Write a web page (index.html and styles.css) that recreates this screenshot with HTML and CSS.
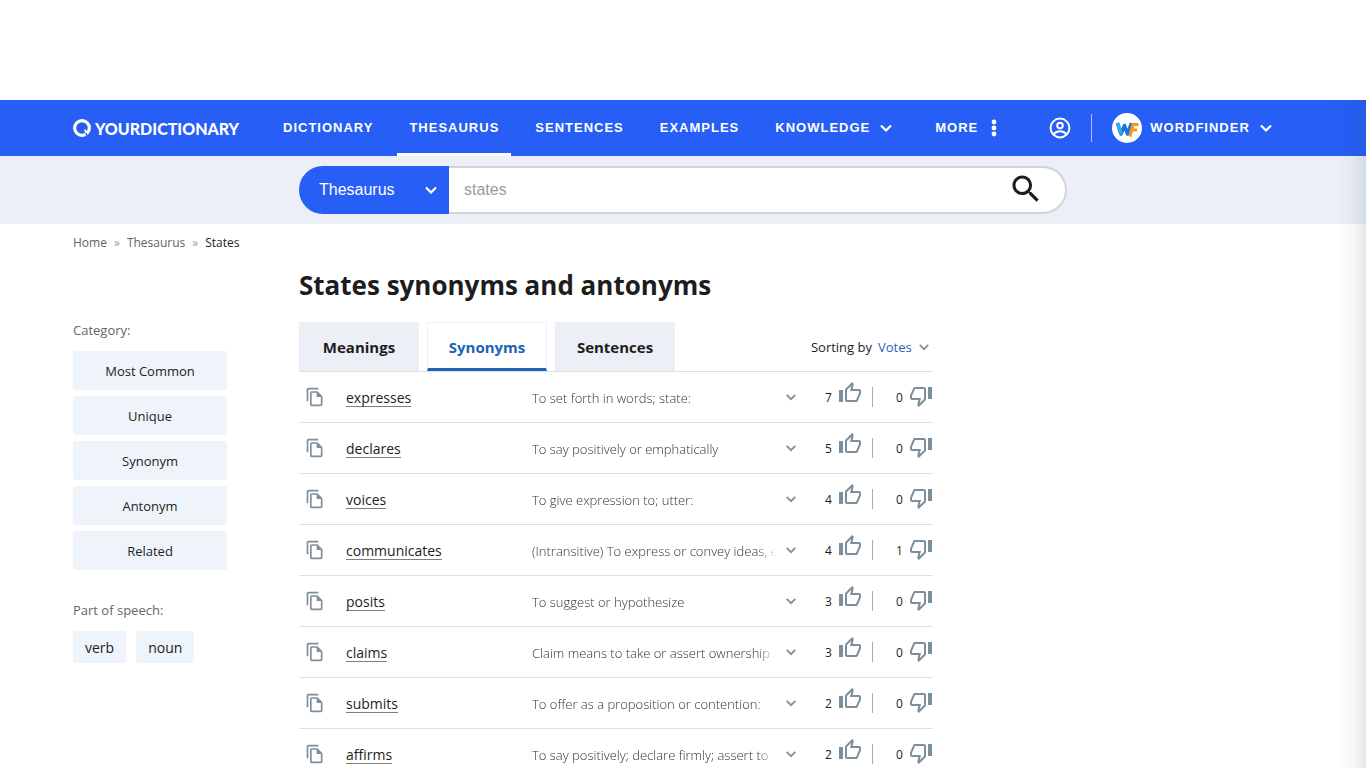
FILE: index.html
```html
<!DOCTYPE html>
<html lang="en">

<head>
  <meta charset="UTF-8" />
  <title>States synonyms and antonyms</title>
  <meta name="viewport" content="width=device-width, initial-scale=1.0" />
  <link rel="stylesheet" href="styles.css">
</head>

<body>

  <!-- Shared icons -->
  <svg class="sprite" aria-hidden="true">
    <symbol id="chevron" viewBox="0 0 14 14"><path d="M2 4.5l5 5 5-5" fill="none" stroke="currentColor" stroke-width="2.2" /></symbol>
    <symbol id="copy" viewBox="0 0 24 24"><path d="M16 1H4c-1.1 0-2 .9-2 2v14h2V3h12V1zm-1 4H8c-1.1 0-2 .9-2 2v14c0 1.1.9 2 2 2h11c1.1 0 2-.9 2-2V11l-6-6zM8 21V7h6v5h5v9H8z" /></symbol>
    <symbol id="up" viewBox="0 0 24 24"><path d="M9 21h9c.83 0 1.54-.5 1.84-1.22l3.02-7.05c.09-.23.14-.47.14-.73v-2c0-1.1-.9-2-2-2h-6.31l.95-4.57.03-.32c0-.41-.17-.79-.44-1.06L14.17 1 7.58 7.59C7.22 7.95 7 8.45 7 9v10c0 1.1.9 2 2 2zM9 9l4.34-4.34L12 10h9v2l-3 7H9V9zM1 9h4v12H1z" /></symbol>
    <symbol id="down" viewBox="0 0 24 24"><path d="M15 3H6c-.83 0-1.54.5-1.84 1.22l-3.02 7.05c-.09.23-.14.47-.14.73v2c0 1.1.9 2 2 2h6.31l-.95 4.57-.03.32c0 .41.17.79.44 1.06L9.83 23l6.59-6.59c.36-.36.58-.86.58-1.41V5c0-1.1-.9-2-2-2zm0 12l-4.34 4.34L12 14H3v-2l3-7h9v10zm4-12h4v12h-4V3z" /></symbol>
  </svg>

  <div class="ad-space"></div>

  <header class="topbar">
    <div class="container topbar-inner">
      <a href="#" class="logo">
        <svg width="18" height="18" viewBox="0 0 18 18"><circle cx="9" cy="9" r="7.4" fill="none" stroke="#fff" stroke-width="3.2" /><path d="M11.500 11.500l3 6" stroke="#2860f6" stroke-width="1.600" /><path d="M11.800 10.600l1.700 3.400" stroke="#fff" stroke-width="1.800" /></svg>
        <span>YOURDICTIONARY</span>
      </a>
      <nav class="nav">
        <a href="#">DICTIONARY</a>
        <a href="#" class="active">THESAURUS</a>
        <a href="#">SENTENCES</a>
        <a href="#">EXAMPLES</a>
        <button type="button">KNOWLEDGE <svg class="nav-arrow"><use href="#chevron" /></svg></button>
        <button type="button" class="more">MORE <svg width="6" height="18" viewBox="0 0 6 18" fill="#fff"><circle cx="3" cy="3" r="2.4" /><circle cx="3" cy="9" r="2.4" /><circle cx="3" cy="15" r="2.4" /></svg></button>
      </nav>
      <div class="account">
        <button type="button" aria-label="Account">
          <svg width="22" height="22" viewBox="0 0 22 22" fill="none" stroke="#fff" stroke-width="2"><circle cx="11" cy="11" r="9.4" /><circle cx="11" cy="8.6" r="2.8" /><path d="M4.8 17.2c3-3.9 9.4-3.9 12.4 0" /></svg>
        </button>
        <button type="button" class="wordfinder">
          <svg width="30" height="30" viewBox="0 0 30 30"><circle cx="15" cy="15" r="15" fill="#fff" /><path d="M5.500 10l3.500 11 3.500-8.500 3 8.500 4-11" fill="none" stroke="#1a76d8" stroke-width="3.600" stroke-linejoin="round" /><path d="M5.500 10l3.500 11" stroke="#37a8ef" stroke-width="3.600" /><path d="M17.800 23.500l3.200-12h5.600M19.600 17h5.400" fill="none" stroke="#f7941d" stroke-width="3.200" /></svg>
          <span>WORDFINDER</span>
          <svg class="nav-arrow"><use href="#chevron" /></svg>
        </button>
      </div>
    </div>
  </header>

  <div class="search-band">
    <div class="container">
      <form class="search">
        <div class="search-type">
          <select aria-label="Search in">
            <option>Thesaurus</option>
            <option>Dictionary</option>
            <option>Sentences</option>
          </select>
          <svg class="nav-arrow"><use href="#chevron" /></svg>
        </div>
        <input type="text" placeholder="states" aria-label="Search word" />
        <button type="submit" aria-label="Search">
          <svg width="36" height="36" viewBox="0 0 24 24" fill="#1d1d1d"><path d="M15.500 14h-.79l-.28-.27C15.410 12.590 16 11.110 16 9.500 16 5.910 13.090 3 9.500 3S3 5.910 3 9.500 5.910 16 9.500 16c1.610 0 3.090-.59 4.230-1.570l.27.28v.79l5 4.990L20.490 19l-4.990-5zm-6 0C7.010 14 5 11.990 5 9.500S7.010 5 9.500 5 14 7.010 14 9.500 11.990 14 9.500 14z" /></svg>
        </button>
      </form>
    </div>
  </div>

  <div class="container">
    <nav class="breadcrumb" aria-label="Breadcrumb">
      <a href="#">Home</a><span class="sep">»</span><a href="#">Thesaurus</a><span class="sep">»</span><span class="current">States</span>
    </nav>

    <div class="layout">
      <aside class="filters">
        <p class="filter-title">Category:</p>
        <div class="categories">
          <button type="button">Most Common</button>
          <button type="button">Unique</button>
          <button type="button">Synonym</button>
          <button type="button">Antonym</button>
          <button type="button">Related</button>
        </div>
        <p class="filter-title">Part of speech:</p>
        <div class="pos">
          <button type="button">verb</button>
          <button type="button">noun</button>
        </div>
      </aside>

      <main>
        <h1>States synonyms and antonyms</h1>
        <div class="tabs">
          <a href="#">Meanings</a>
          <a href="#" class="active">Synonyms</a>
          <a href="#">Sentences</a>
          <div class="sorting">
            <label for="sort">Sorting by</label>
            <select id="sort">
              <option>Votes</option>
              <option>A-Z</option>
            </select>
            <svg class="arrow"><use href="#chevron" /></svg>
          </div>
        </div>

        <table class="words">
          <tbody>
            <tr>
              <td class="copy"><button type="button" aria-label="Copy"><svg><use href="#copy" /></svg></button></td>
              <td class="word"><a href="#">expresses</a></td>
              <td class="desc"><div>To set forth in words; state:</div></td>
              <td class="more-cell"><button type="button" aria-label="Expand"><svg class="arrow"><use href="#chevron" /></svg></button></td>
              <td class="votes"><div><span>7</span><button type="button" class="up" aria-label="Vote up"><svg><use href="#up" /></svg></button><i></i><span>0</span><button type="button" class="down" aria-label="Vote down"><svg><use href="#down" /></svg></button></div></td>
            </tr>
            <tr>
              <td class="copy"><button type="button" aria-label="Copy"><svg><use href="#copy" /></svg></button></td>
              <td class="word"><a href="#">declares</a></td>
              <td class="desc"><div>To say positively or emphatically</div></td>
              <td class="more-cell"><button type="button" aria-label="Expand"><svg class="arrow"><use href="#chevron" /></svg></button></td>
              <td class="votes"><div><span>5</span><button type="button" class="up" aria-label="Vote up"><svg><use href="#up" /></svg></button><i></i><span>0</span><button type="button" class="down" aria-label="Vote down"><svg><use href="#down" /></svg></button></div></td>
            </tr>
            <tr>
              <td class="copy"><button type="button" aria-label="Copy"><svg><use href="#copy" /></svg></button></td>
              <td class="word"><a href="#">voices</a></td>
              <td class="desc"><div>To give expression to; utter:</div></td>
              <td class="more-cell"><button type="button" aria-label="Expand"><svg class="arrow"><use href="#chevron" /></svg></button></td>
              <td class="votes"><div><span>4</span><button type="button" class="up" aria-label="Vote up"><svg><use href="#up" /></svg></button><i></i><span>0</span><button type="button" class="down" aria-label="Vote down"><svg><use href="#down" /></svg></button></div></td>
            </tr>
            <tr>
              <td class="copy"><button type="button" aria-label="Copy"><svg><use href="#copy" /></svg></button></td>
              <td class="word"><a href="#">communicates</a></td>
              <td class="desc"><div>(Intransitive) To express or convey ideas, e</div></td>
              <td class="more-cell"><button type="button" aria-label="Expand"><svg class="arrow"><use href="#chevron" /></svg></button></td>
              <td class="votes"><div><span>4</span><button type="button" class="up" aria-label="Vote up"><svg><use href="#up" /></svg></button><i></i><span>1</span><button type="button" class="down" aria-label="Vote down"><svg><use href="#down" /></svg></button></div></td>
            </tr>
            <tr>
              <td class="copy"><button type="button" aria-label="Copy"><svg><use href="#copy" /></svg></button></td>
              <td class="word"><a href="#">posits</a></td>
              <td class="desc"><div>To suggest or hypothesize</div></td>
              <td class="more-cell"><button type="button" aria-label="Expand"><svg class="arrow"><use href="#chevron" /></svg></button></td>
              <td class="votes"><div><span>3</span><button type="button" class="up" aria-label="Vote up"><svg><use href="#up" /></svg></button><i></i><span>0</span><button type="button" class="down" aria-label="Vote down"><svg><use href="#down" /></svg></button></div></td>
            </tr>
            <tr>
              <td class="copy"><button type="button" aria-label="Copy"><svg><use href="#copy" /></svg></button></td>
              <td class="word"><a href="#">claims</a></td>
              <td class="desc"><div>Claim means to take or assert ownership</div></td>
              <td class="more-cell"><button type="button" aria-label="Expand"><svg class="arrow"><use href="#chevron" /></svg></button></td>
              <td class="votes"><div><span>3</span><button type="button" class="up" aria-label="Vote up"><svg><use href="#up" /></svg></button><i></i><span>0</span><button type="button" class="down" aria-label="Vote down"><svg><use href="#down" /></svg></button></div></td>
            </tr>
            <tr>
              <td class="copy"><button type="button" aria-label="Copy"><svg><use href="#copy" /></svg></button></td>
              <td class="word"><a href="#">submits</a></td>
              <td class="desc"><div>To offer as a proposition or contention:</div></td>
              <td class="more-cell"><button type="button" aria-label="Expand"><svg class="arrow"><use href="#chevron" /></svg></button></td>
              <td class="votes"><div><span>2</span><button type="button" class="up" aria-label="Vote up"><svg><use href="#up" /></svg></button><i></i><span>0</span><button type="button" class="down" aria-label="Vote down"><svg><use href="#down" /></svg></button></div></td>
            </tr>
            <tr>
              <td class="copy"><button type="button" aria-label="Copy"><svg><use href="#copy" /></svg></button></td>
              <td class="word"><a href="#">affirms</a></td>
              <td class="desc"><div>To say positively; declare firmly; assert to</div></td>
              <td class="more-cell"><button type="button" aria-label="Expand"><svg class="arrow"><use href="#chevron" /></svg></button></td>
              <td class="votes"><div><span>2</span><button type="button" class="up" aria-label="Vote up"><svg><use href="#up" /></svg></button><i></i><span>0</span><button type="button" class="down" aria-label="Vote down"><svg><use href="#down" /></svg></button></div></td>
            </tr>
          </tbody>
        </table>
      </main>
    </div>
  </div>

  <div class="edge-shadow"></div>

</body>

</html>
```
FILE: styles.css
```css
* {
  box-sizing: border-box;
}

html {
  scrollbar-width: none;
}

body {
  margin: 0;
  font-family: "Segoe UI", "Open Sans", sans-serif;
  font-size: 14px;
  color: #1d1d1d;
  background-color: #fff;
}

a {
  color: inherit;
  text-decoration: none;
}

button,
select {
  padding: 0;
  border: none;
  background: none;
  color: inherit;
  font: inherit;
  letter-spacing: inherit;
  cursor: pointer;
  appearance: none;
}

svg {
  display: block;
  flex: none;
}

.sprite {
  position: absolute;
  width: 0;
  height: 0;
}

.container {
  max-width: 1220px;
  margin: 0 auto;
}

.ad-space {
  height: 100px;
}

/* Top bar */
.topbar {
  background-color: #265ef6;
  color: #fff;
  font: bold 13px "Liberation Sans", Arial, sans-serif;
  letter-spacing: 1px;
}

.topbar-inner {
  display: flex;
  height: 56px;
}

.logo {
  display: flex;
  align-items: center;
  gap: 4px;
  width: 198px;
  font: 900 16px Lato, sans-serif;
  letter-spacing: 0;
}

.nav {
  display: flex;
  gap: 12px;
}

.nav a,
.nav button {
  display: flex;
  align-items: center;
  gap: 9px;
  padding: 2px 12px 0;
  border-bottom: 3px solid transparent;
}

.nav a.active {
  border-bottom-color: #fff;
}

.nav .more {
  gap: 13px;
  margin-left: 6px;
}

.nav-arrow {
  width: 14px;
  height: 14px;
}

.account {
  display: flex;
  align-items: center;
  margin-left: 40px;
}

.wordfinder {
  display: flex;
  align-items: center;
  gap: 8px;
  margin-left: 41px;
  position: relative;
}

.wordfinder span {
  padding: 0 1px 2px 0;
}

.wordfinder::before {
  content: "";
  position: absolute;
  left: -21px;
  width: 1px;
  height: 28px;
  background-color: #a9c0fb;
}

/* Search */
.search-band {
  padding: 10px 0;
  background-color: #eceff5;
}

.search {
  display: flex;
  align-items: center;
  max-width: 768px;
  height: 48px;
  margin-left: 226px;
  border: 2px solid #d0d5db;
  border-left: none;
  border-radius: 24px;
  background-color: #fff;
  font: 16px "Liberation Sans", Arial, sans-serif;
}

.search-type {
  position: relative;
  width: 150px;
  height: 48px;
}

.search-type select {
  width: 100%;
  height: 100%;
  padding: 0 20px 2px;
  border-radius: 24px 0 0 24px;
  background-color: #265ef6;
  color: #fff;
}

.search-type svg {
  position: absolute;
  top: 17px;
  right: 11px;
  color: #fff;
  pointer-events: none;
}

.search input {
  flex: 1;
  min-width: 0;
  padding: 0 15px;
  border: none;
  outline: none;
  background: none;
  font: inherit;
}

.search input::placeholder {
  color: #9b9b9b;
}

.search button {
  margin-right: 21px;
  padding-bottom: 2px;
}

/* Breadcrumb */
.breadcrumb {
  display: flex;
  padding-top: 10px;
  font-size: 12px;
  line-height: 18px;
  color: #5f6368;
}

.breadcrumb .sep {
  padding: 0 7px;
  color: #9aa0a6;
}

.breadcrumb .current {
  color: #1d1d1d;
}

.layout {
  display: grid;
  grid-template-columns: 154px minmax(0, 634px);
  gap: 72px;
}

/* Filters */
.filters {
  padding-top: 68px;
}

.filter-title {
  margin: 0;
  font-size: 13px;
  line-height: 20px;
  color: #666;
}

.categories {
  display: grid;
  gap: 6px;
  margin: 11px 0 30px;
}

.filters button {
  border-radius: 3px;
  background-color: #eff4fa;
}

.categories button {
  height: 39px;
  font-size: 13px;
}

.pos {
  display: flex;
  gap: 10px;
  margin-top: 11px;
}

.pos button {
  height: 32px;
  padding: 0 12px;
}

/* Word list */
h1 {
  margin: 13px 0 17px;
  font-size: 26px;
  line-height: 40px;
}

.tabs {
  display: flex;
  gap: 8px;
  border-bottom: 1px solid #dde0e4;
}

.tabs > a {
  width: 120px;
  height: 49px;
  border: 1px solid #eceff5;
  border-bottom: none;
  background-color: #eceff5;
  font-size: 15px;
  font-weight: bold;
  line-height: 48px;
  text-align: center;
}

.tabs > .active {
  border-bottom: 3px solid #2063b4;
  background-color: #fff;
  color: #2063b4;
}

.sorting {
  display: flex;
  align-items: center;
  gap: 6px;
  margin-left: auto;
  padding-right: 3px;
  font-size: 13px;
}

.sorting select {
  color: #2d5fc0;
}

.arrow {
  width: 12px;
  height: 12px;
  color: #7f919e;
}

.words {
  width: 100%;
  border-spacing: 0;
  table-layout: fixed;
}

.words td {
  height: 51px;
  padding: 0;
  border-bottom: 1px solid #dde0e4;
}

.words button {
  display: block;
  color: #7b8f9c;
}

.words button svg {
  fill: currentColor;
}

.words .copy {
  width: 47px;
  padding-left: 6px;
}

.copy svg {
  width: 20px;
  height: 20px;
}

.words .word {
  width: 186px;
}

.word a {
  display: inline-block;
  border-bottom: 1px solid #7f7f7f;
  font-weight: 500;
  line-height: 16px;
}

.desc div {
  overflow: hidden;
  padding-top: 2px;
  font-size: 13px;
  font-weight: 300;
  white-space: nowrap;
  color: #333;
  mask-image: linear-gradient(to right, #000 92%, transparent);
}

.words .more-cell {
  width: 32px;
  padding-left: 8px;
}

.words .votes {
  width: 124px;
}

.votes div {
  display: flex;
  align-items: center;
  justify-content: flex-end;
  font-size: 12px;
}

.votes span {
  width: 8px;
}

.votes i {
  width: 1px;
  height: 20px;
  margin: 0 23px 0 10px;
  background-color: #a5adb5;
}

.votes svg {
  width: 24px;
  height: 24px;
}

.votes .up {
  margin-left: 5px;
  padding-bottom: 9px;
}

.votes .down {
  margin-left: 5px;
  padding-bottom: 3px;
}

/* Shadow of the closed side panel */
.edge-shadow {
  position: fixed;
  top: 100px;
  right: 0;
  bottom: 0;
  width: 32px;
  background: linear-gradient(to left, rgba(60, 80, 100, 0.13), rgba(60, 80, 100, 0.03) 50%, transparent);
  pointer-events: none;
}
```
